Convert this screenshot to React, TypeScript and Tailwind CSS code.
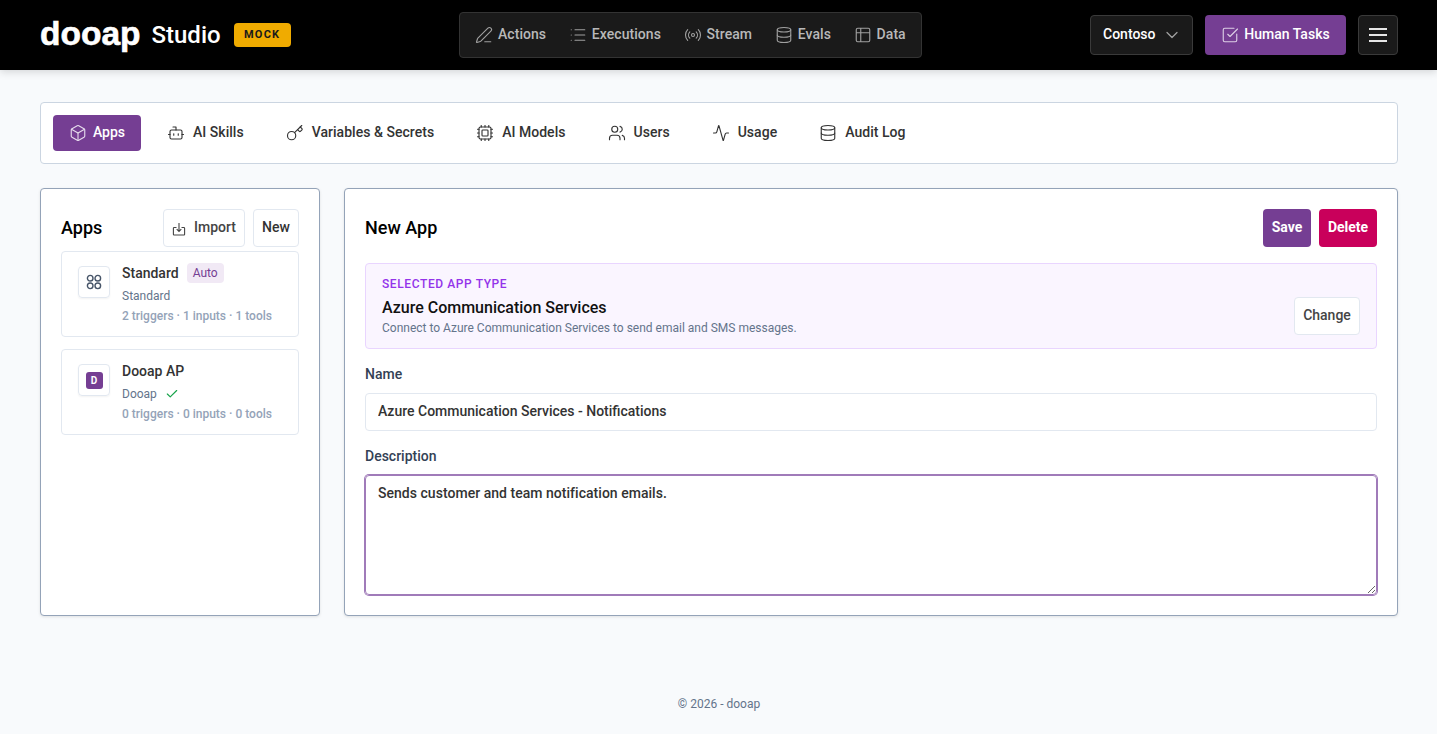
import { Activity, Bot, Box, Check, ChevronDown, Cpu, Database, Key, List, PenLine, Radio, SquareCheckBig, Table2, Users } from 'lucide-react';
import type { ComponentType, ReactNode } from 'react';

type NavItem = { label: string; icon: ComponentType<{ className?: string; strokeWidth?: number }> };

const topNav: NavItem[] = [
    { label: 'Actions', icon: PenLine },
    { label: 'Executions', icon: List },
    { label: 'Stream', icon: Radio },
    { label: 'Evals', icon: Database },
    { label: 'Data', icon: Table2 },
];

const tabs: NavItem[] = [
    { label: 'AI Skills', icon: Bot },
    { label: 'Variables & Secrets', icon: Key },
    { label: 'AI Models', icon: Cpu },
    { label: 'Users', icon: Users },
    { label: 'Usage', icon: Activity },
    { label: 'Audit Log', icon: Database },
];

function Header() {
    return (
        <header className="relative z-10 h-[70px] bg-black flex items-center pl-10 pr-[39px] shadow-[0_2px_8px_rgba(0,0,0,0.15)]">
            <div className="flex items-center w-[419px]">
                <span className="text-white text-[33.5px] font-bold leading-none -mt-[3px] [-webkit-text-stroke:0.6px_white] font-['Liberation_Sans',sans-serif]">dooap</span>
                <span className="text-white text-2xl font-medium ml-[11px]">Studio</span>
                <span className="ml-[13px] h-6 w-[57px] flex items-center justify-center rounded bg-[#f0ab00] text-[#1a1a1a] text-[11px] font-bold tracking-[1.2px]">MOCK</span>
            </div>
            <nav className="h-[46px] w-[463px] flex items-center gap-[22.7px] pl-[15px] bg-[#1a1a1a] border border-[#333] rounded">
                {topNav.map(({ label, icon: Icon }) => (
                    <a key={label} className="flex items-center gap-[5px] text-sm font-medium text-[#b8b8b8]">
                        <Icon className="w-[18px] h-[18px] text-[#a0a0a0]" strokeWidth={1.5} />
                        <span className="-mt-[2px] tracking-[0.05px]">{label}</span>
                    </a>
                ))}
            </nav>
            <div className="ml-auto flex items-center gap-3">
                <button className="h-10 w-[103px] pl-3 pr-[10px] flex items-center justify-between bg-[#1a1a1a] border border-[#3a3a3a] rounded text-white text-sm font-medium">
                    <span className="-mt-[2px]">Contoso</span>
                    <ChevronDown className="w-5 h-5 text-[#a0a0a0]" strokeWidth={1.5} />
                </button>
                <button className="h-10 w-[141px] flex items-center justify-center gap-[5px] bg-[#753e93] rounded text-white text-sm font-medium">
                    <SquareCheckBig className="w-[18px] h-[18px] text-[#ddd0e6]" strokeWidth={1.5} />
                    <span className="-mt-[2px]">Human Tasks</span>
                </button>
                <button className="h-10 w-10 flex items-center justify-center bg-[#1a1a1a] border border-[#3a3a3a] rounded">
                    <svg width="18" height="14" viewBox="0 0 18 14" fill="none" stroke="#e6e6e6" strokeWidth="2">
                        <path d="M0 1h18M0 7h18M0 13h18" />
                    </svg>
                </button>
            </div>
        </header>
    );
}

function TabBar() {
    return (
        <div className="h-[62px] bg-white border border-[#cbd5e1] rounded flex items-center pl-3">
            <a className="h-9 w-[88px] flex items-center justify-center gap-[6px] bg-[#753e93] rounded text-white text-sm font-medium">
                <Box className="w-[18px] h-[18px] text-[#e6dcec]" strokeWidth={1.5} />
                <span className="-mt-[2px]">Apps</span>
            </a>
            <div className="flex items-center ml-[26px] gap-[42px]">
                {tabs.map(({ label, icon: Icon }) => (
                    <a key={label} className="flex items-center gap-2 text-sm font-medium text-[#333]">
                        <Icon className="w-[18px] h-[18px]" strokeWidth={1.5} />
                        <span className="-mt-[2px] tracking-[0.03px]">{label}</span>
                    </a>
                ))}
            </div>
        </div>
    );
}

function AppCard({ name, type, meta, icon, extra }: { name: string; type: string; meta: string; icon: ReactNode; extra?: ReactNode }) {
    return (
        <div className="h-[86px] bg-white border border-[#e2e8f0] rounded flex pl-4 pt-[14px]">
            <div className="w-8 h-8 flex items-center justify-center border border-[#e2e8f0] rounded shadow-[0_1px_2px_rgba(0,0,0,0.05)]">{icon}</div>
            <div className="ml-3 -mt-[5px]">
                <div className="flex items-center h-6 gap-2 text-sm font-medium text-[#333]">
                    {name}
                    {extra}
                </div>
                <div className="flex items-center h-[20px] mt-[1px] text-xs text-[#64748b] gap-2">
                    {type}
                    {type === 'Dooap' && <Check className="w-3.5 h-3.5 text-[#16a34a]" strokeWidth={2} />}
                </div>
                <div className="text-xs font-medium leading-5 text-[#94a3b8]">{meta}</div>
            </div>
        </div>
    );
}

function AppsPanel() {
    return (
        <aside className="w-[280px] h-[428px] shrink-0 bg-white border border-[#94a3b8] rounded shadow-[0_1px_3px_rgba(0,0,0,0.1)] px-5 pt-5">
            <div className="flex items-center justify-between h-[38px]">
                <h2 className="text-lg font-medium text-black">Apps</h2>
                <div className="flex gap-2">
                    <button className="h-[38px] w-[82px] pb-[2px] flex items-center justify-center gap-[8px] border border-[#e2e8f0] rounded text-sm font-medium text-[#444]">
                        <svg width="14" height="14" viewBox="0 0 14 14" fill="none" stroke="#444" strokeWidth="1.1" className="mt-[3px]">
                            <path d="M4.5 5.5H2.2a.8.8 0 0 0-.8.8v5.9a.8.8 0 0 0 .8.8h9.6a.8.8 0 0 0 .8-.8V6.3a.8.8 0 0 0-.8-.8H9.5" />
                            <path d="M7 1v8.5M4.7 7.2 7 9.5l2.3-2.3" />
                        </svg>
                        Import
                    </button>
                    <button className="h-[38px] w-[46px] pb-[2px] border border-[#e2e8f0] rounded text-sm font-medium text-[#333]">New</button>
                </div>
            </div>
            <div className="mt-1 flex flex-col gap-3">
                <AppCard
                    name="Standard"
                    type="Standard"
                    meta="2 triggers · 1 inputs · 1 tools"
                    icon={
                        <svg width="16" height="16" viewBox="0 0 16 16" fill="none" stroke="#475569" strokeWidth="1.4">
                            <circle cx="4.2" cy="4.2" r="2.8" />
                            <circle cx="11.8" cy="4.2" r="2.8" />
                            <circle cx="4.2" cy="11.8" r="2.8" />
                            <circle cx="11.8" cy="11.8" r="2.8" />
                        </svg>
                    }
                    extra={<span className="h-5 px-[6px] flex items-center rounded bg-[#f1e9f5] text-[#753e93] text-xs font-normal">Auto</span>}
                />
                <AppCard
                    name="Dooap AP"
                    type="Dooap"
                    meta="0 triggers · 0 inputs · 0 tools"
                    icon={<span className="w-[17px] h-[17px] flex items-center justify-center rounded-[3px] bg-[#753e93] text-white text-[10px] font-bold">D</span>}
                />
            </div>
        </aside>
    );
}

function EditorPanel() {
    return (
        <section className="flex-1 h-[428px] bg-white border border-[#94a3b8] rounded shadow-[0_1px_3px_rgba(0,0,0,0.1)] px-5 pt-5">
            <div className="flex items-center justify-between h-[38px]">
                <h2 className="text-lg font-medium text-black">New App</h2>
                <div className="flex gap-2">
                    <button className="h-[38px] w-12 pb-[2px] rounded bg-[#753e93] text-white text-sm font-bold">Save</button>
                    <button className="h-[38px] w-[58px] pb-[2px] rounded bg-[#c9005b] text-white text-sm font-bold">Delete</button>
                </div>
            </div>
            <div className="mt-4 h-[86px] bg-[#faf5ff] border border-[#e9d5ff] rounded flex items-center justify-between pl-4 pr-4">
                <div>
                    <div className="text-xs font-medium leading-4 tracking-[0.6px] text-[#9333ea]">SELECTED APP TYPE</div>
                    <div className="text-base font-medium leading-6 mt-[4px] text-[#111]">Azure Communication Services</div>
                    <div className="text-xs leading-4 text-[#64748b]">Connect to Azure Communication Services to send email and SMS messages.</div>
                </div>
                <button className="h-[38px] w-[66px] pb-[2px] self-end mb-[13px] bg-white border border-[#e2e8f0] rounded text-sm font-medium text-[#444]">Change</button>
            </div>
            <label className="block mt-[15px] text-sm font-medium leading-5 text-[#334155]">Name</label>
            <input
                readOnly
                value="Azure Communication Services - Notifications"
                className="block mt-[9px] w-full h-[38px] px-3 pb-[2px] border border-[#e2e8f0] rounded text-sm font-medium text-[#333] outline-none"
            />
            <label className="block mt-[15px] text-sm font-medium leading-5 text-[#334155]">Description</label>
            <textarea
                readOnly
                value="Sends customer and team notification emails."
                className="block mt-[9px] w-full h-[120px] px-3 py-[7px] border border-[#a07bb9] ring-1 ring-[#a07bb9] rounded text-sm leading-5 font-medium tracking-[0.03px] text-[#333] outline-none"
            />
        </section>
    );
}

export default function App() {
    return (
        <div className="min-h-screen bg-[#f8fafc] font-['Roboto',sans-serif]">
            <Header />
            <main className="pl-10 pr-[39px] pt-8">
                <TabBar />
                <div className="flex gap-6 mt-6">
                    <AppsPanel />
                    <EditorPanel />
                </div>
            </main>
            <footer className="mt-[80px] pl-px text-center text-xs leading-4 text-[#64748b]">© 2026 - dooap</footer>
        </div>
    );
}
